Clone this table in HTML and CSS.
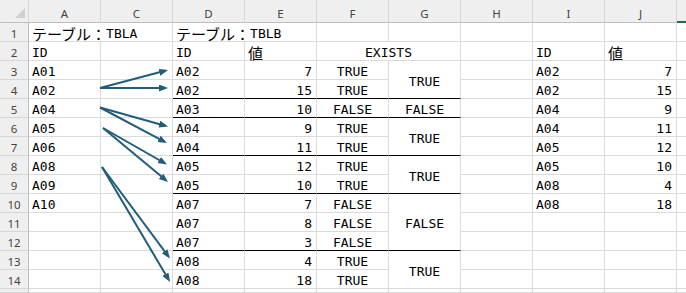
FILE: index.html
```html
<!DOCTYPE html>
<html lang="ja">
<head>
<meta charset="utf-8">
<title>TBLA / TBLB</title>
<link rel="stylesheet" href="styles.css">
</head>
<body>
<div class="sheet">
  <div class="hd corner"><svg class="tri" width="12" height="12" viewBox="0 0 12 12"><polygon points="11,1 11,11 1,11" fill="#cfcfcf"/></svg></div>
  <div class="hd">A</div><div class="hd">C</div><div class="hd">D</div><div class="hd">E</div><div class="hd">F</div><div class="hd">G</div><div class="hd">H</div><div class="hd">I</div><div class="hd">J</div><div class="hd kh"></div>

  <div class="rn">1</div><div class="s2"><span class="jp">テーブル：</span>TBLA</div><div class="s2"><span class="jp">テーブル：</span>TBLB</div><div></div><div></div><div></div><div></div><div></div><div class="k"></div>

  <div class="rn">2</div><div>ID</div><div></div><div>ID</div><div><span class="jp">値</span></div><div class="s2 m">EXISTS</div><div></div><div>ID</div><div><span class="jp">値</span></div><div class="k"></div>

  <div class="rn">3</div><div>A01</div><div></div><div>A02</div><div class="r">7</div><div class="m">TRUE</div><div class="r2 m bb">TRUE</div><div></div><div>A02</div><div class="r">7</div><div class="k"></div>

  <div class="rn">4</div><div>A02</div><div></div><div class="bb">A02</div><div class="r bb">15</div><div class="m bb">TRUE</div><div></div><div>A02</div><div class="r">15</div><div class="k"></div>

  <div class="rn">5</div><div>A04</div><div></div><div class="bb">A03</div><div class="r bb">10</div><div class="m bb">FALSE</div><div class="m bb">FALSE</div><div></div><div>A04</div><div class="r">9</div><div class="k"></div>

  <div class="rn">6</div><div>A05</div><div></div><div>A04</div><div class="r">9</div><div class="m">TRUE</div><div class="r2 m bb">TRUE</div><div></div><div>A04</div><div class="r">11</div><div class="k"></div>

  <div class="rn">7</div><div>A06</div><div></div><div class="bb">A04</div><div class="r bb">11</div><div class="m bb">TRUE</div><div></div><div>A05</div><div class="r">12</div><div class="k"></div>

  <div class="rn">8</div><div>A08</div><div></div><div>A05</div><div class="r">12</div><div class="m">TRUE</div><div class="r2 m bb">TRUE</div><div></div><div>A05</div><div class="r">10</div><div class="k"></div>

  <div class="rn">9</div><div>A09</div><div></div><div class="bb">A05</div><div class="r bb">10</div><div class="m bb">TRUE</div><div></div><div>A08</div><div class="r">4</div><div class="k"></div>

  <div class="rn">10</div><div>A10</div><div></div><div>A07</div><div class="r">7</div><div class="m">FALSE</div><div class="r3 m bb">FALSE</div><div></div><div>A08</div><div class="r">18</div><div class="k"></div>

  <div class="rn">11</div><div></div><div></div><div>A07</div><div class="r">8</div><div class="m">FALSE</div><div></div><div></div><div></div><div class="k"></div>

  <div class="rn">12</div><div></div><div></div><div class="bb">A07</div><div class="r bb">3</div><div class="m bb">FALSE</div><div></div><div></div><div></div><div class="k"></div>

  <div class="rn">13</div><div></div><div></div><div>A08</div><div class="r">4</div><div class="m">TRUE</div><div class="r2 m">TRUE</div><div></div><div></div><div></div><div class="k"></div>

  <div class="rn">14</div><div></div><div></div><div>A08</div><div class="r">18</div><div class="m">TRUE</div><div></div><div></div><div></div><div class="k"></div>

  <div class="rn"></div><div></div><div></div><div></div><div></div><div></div><div></div><div></div><div></div><div></div><div class="k"></div>
</div>

<svg class="arrows" width="686" height="293" viewBox="0 0 686 293">
  <defs>
    <marker id="ah" markerUnits="userSpaceOnUse" markerWidth="10" markerHeight="8" refX="6" refY="3.5" orient="auto">
      <path d="M0,0 L9,3.5 L0,7 Z" fill="#215d7b"/>
    </marker>
  </defs>
  <g stroke="#215d7b" stroke-width="2" fill="none" marker-end="url(#ah)">
    <line x1="100" y1="88" x2="165.1" y2="70.8"/>
    <line x1="100" y1="88" x2="165" y2="88"/>
    <line x1="100" y1="107.5" x2="165.1" y2="125.7"/>
    <line x1="100" y1="107.5" x2="164.3" y2="141.6"/>
    <line x1="103" y1="128" x2="164.4" y2="163"/>
    <line x1="103" y1="128" x2="165.7" y2="180.1"/>
    <line x1="102" y1="167" x2="168.2" y2="256.1"/>
    <line x1="102" y1="167" x2="168.5" y2="279.4"/>
  </g>
</svg>
</body>
</html>
```

FILE: styles.css
```css
html, body {
  margin: 0;
  padding: 0;
  background: #fff;
}

body {
  width: 686px;
  height: 293px;
  overflow: hidden;
  position: relative;
}

.sheet {
  display: grid;
  grid-template-columns: 29px repeat(9, 72px) 1fr;
  grid-template-rows: 23px repeat(14, 19px) 1fr;
  height: 293px;
  font-family: "DejaVu Sans Mono", monospace;
  font-size: 13px;
  line-height: 15px;
  color: #000;
}

.sheet > div {
  box-sizing: border-box;
  min-height: 0;
  border-right: 1px solid #dadada;
  border-bottom: 1px solid #dadada;
  display: flex;
  align-items: center;
  padding: 3px 3px 0;
  white-space: nowrap;
}

.jp {
  font-family: "Noto Sans CJK JP", sans-serif;
  font-size: 15px;
  line-height: 15px;
}

.sheet > .hd {
  background: #efefef;
  border-right-color: #d6d6d6;
  border-bottom-color: #bdbdbd;
  justify-content: center;
  font-family: "Noto Sans", sans-serif;
  font-size: 11.5px;
  color: #444;
  padding: 5px 0 0;
}

.sheet > .corner {
  justify-content: flex-end;
  align-items: flex-end;
  padding: 0 2px 3px 0;
}

.tri {
  display: block;
}

.sheet > .kh {
  border-right: none;
  border-bottom: 2px solid #1e7145;
}

.sheet > .rn {
  background: #efefef;
  border-right-color: #bdbdbd;
  border-bottom-color: #d6d6d6;
  justify-content: center;
  font-family: "Noto Sans", sans-serif;
  font-size: 11.5px;
  color: #444;
  padding: 3px 0 0;
}

.s2 {
  grid-column: span 2;
}

.r2 {
  grid-row: span 2;
}

.r3 {
  grid-row: span 3;
}

.sheet > .r {
  justify-content: flex-end;
  padding-right: 4px;
}

.sheet > .m {
  justify-content: center;
}

.sheet > .k {
  border-right: none;
}

.sheet > .bb {
  border-bottom-color: #000;
}

.arrows {
  position: absolute;
  left: 0;
  top: 0;
  pointer-events: none;
}
```
